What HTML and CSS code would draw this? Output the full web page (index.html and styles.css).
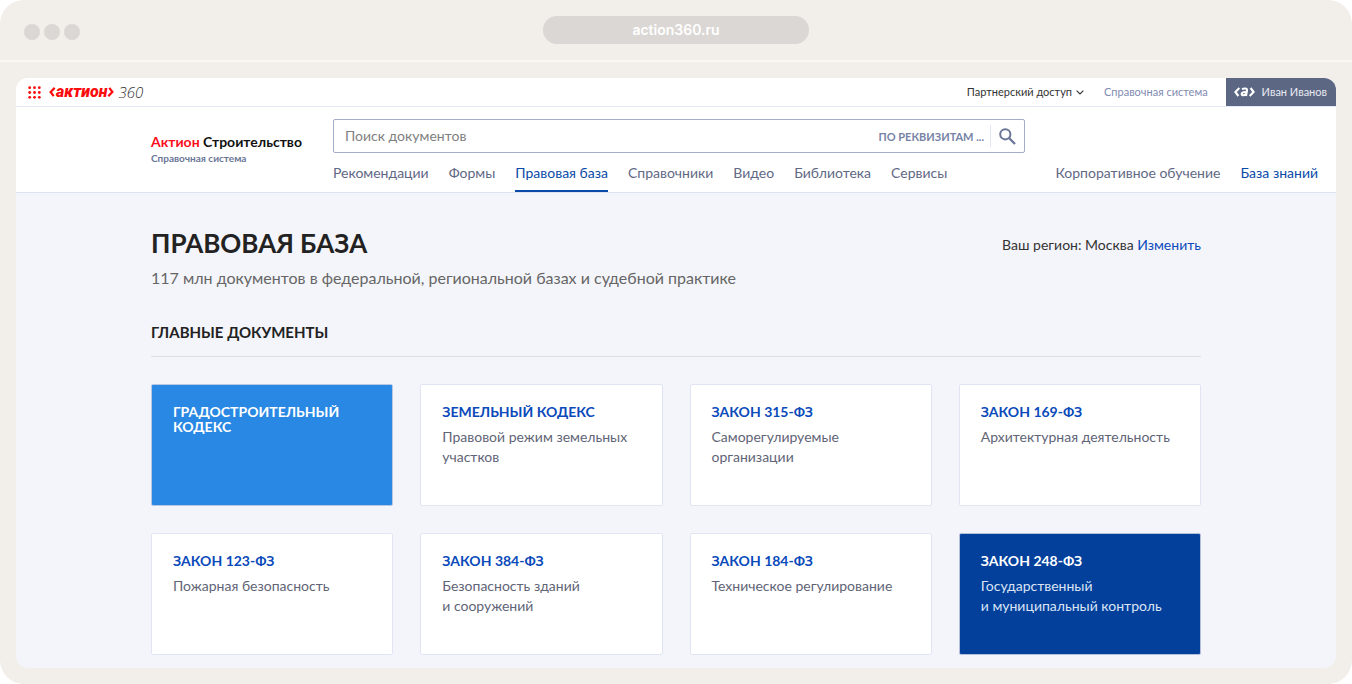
FILE: index.html
```html
<!DOCTYPE html>
<html lang="ru">
<head>
<meta charset="utf-8">
<meta name="viewport" content="width=device-width, initial-scale=1">
<title>Правовая база</title>
<link rel="stylesheet" href="styles.css">
</head>
<body>
<div class="browser">
  <div class="browser-bar">
    <div class="dots"><span class="dot"></span><span class="dot"></span><span class="dot"></span></div>
    <div class="address">action360.ru</div>
  </div>
  <div class="page">
    <div class="topbar">
      <button class="apps" type="button" aria-label="Сервисы">
        <svg width="13" height="13" viewBox="0 0 13 13" fill="#fb0d0d"><circle cx="1.7" cy="1.7" r="1.4"/><circle cx="6.5" cy="1.7" r="1.4"/><circle cx="11.3" cy="1.7" r="1.4"/><circle cx="1.7" cy="6.5" r="1.4"/><circle cx="6.5" cy="6.5" r="1.4"/><circle cx="11.3" cy="6.5" r="1.4"/><circle cx="1.7" cy="11.3" r="1.4"/><circle cx="6.5" cy="11.3" r="1.4"/><circle cx="11.3" cy="11.3" r="1.4"/></svg>
      </button>
      <a class="logo" href="#">
        <svg width="7" height="10" viewBox="0 0 7 10"><path d="M5.7.9 1.6 5 4.7 9.1" fill="none" stroke="#fb0d0d" stroke-width="2.2"/></svg>
        <span class="logo-name">актион</span>
        <svg width="7" height="10" viewBox="0 0 7 10"><path d="M2.3.9 5.4 5 1.3 9.1" fill="none" stroke="#fb0d0d" stroke-width="2.2"/></svg>
        <span class="logo-num">360</span>
      </a>
      <div class="topbar-right">
        <button class="access" type="button">Партнерский доступ
          <svg width="8" height="5" viewBox="0 0 8 5"><path d="M.6.6 4 4 7.4.6" fill="none" stroke="#333" stroke-width="1.1"/></svg>
        </button>
        <a class="system" href="#">Справочная система</a>
        <button class="user" type="button">
          <svg width="21" height="10" viewBox="0 0 21 10" fill="none" stroke="#fff" stroke-width="2.1"><path d="M5.3 1 1.4 5 4.4 9M16.6 1 19.6 5 15.7 9"/><path d="M7.9 2C10 1.4 13.4 1 13 3.3L12 9M12.3 5C9.6 4.8 7.9 5.3 7.7 6.8 7.5 8.8 10.5 8.6 11.9 7"/></svg>
          <span>Иван Иванов</span>
        </button>
      </div>
    </div>
    <header class="header">
      <a class="brand" href="#">
        <span class="brand-name"><span class="brand-red">Актион</span> Строительство</span>
        <span class="brand-sub">Справочная система</span>
      </a>
      <div class="header-main">
        <form class="search" role="search">
          <input class="search-input" type="text" placeholder="Поиск документов" aria-label="Поиск документов">
          <button class="requisites" type="button">ПО РЕКВИЗИТАМ ...</button>
          <button class="search-go" type="button" aria-label="Найти">
            <svg width="17" height="17" viewBox="0 0 17 17" fill="none" stroke="#6a7697" stroke-width="2"><circle cx="6.3" cy="6.3" r="5.1"/><path d="M10 10 16 16" stroke-width="2.3"/></svg>
          </button>
        </form>
        <nav class="nav">
          <a href="#">Рекомендации</a>
          <a href="#">Формы</a>
          <a class="active" href="#">Правовая база</a>
          <a href="#">Справочники</a>
          <a href="#">Видео</a>
          <a href="#">Библиотека</a>
          <a href="#">Сервисы</a>
          <a class="push" href="#">Корпоративное обучение</a>
          <a class="blue" href="#">База знаний</a>
        </nav>
      </div>
    </header>
    <main class="content">
      <div class="title-row">
        <h1>ПРАВОВАЯ БАЗА</h1>
        <p class="region">Ваш регион: Москва <a href="#">Изменить</a></p>
      </div>
      <p class="lead">117 млн документов в федеральной, региональной базах и судебной практике</p>
      <h2>ГЛАВНЫЕ ДОКУМЕНТЫ</h2>
      <div class="cards">
        <a class="card card-sky" href="#"><h3>ГРАДОСТРОИТЕЛЬНЫЙ КОДЕКС</h3></a>
        <a class="card" href="#"><h3>ЗЕМЕЛЬНЫЙ КОДЕКС</h3><p>Правовой режим земельных участков</p></a>
        <a class="card" href="#"><h3>ЗАКОН 315-ФЗ</h3><p>Саморегулируемые организации</p></a>
        <a class="card" href="#"><h3>ЗАКОН 169-ФЗ</h3><p>Архитектурная деятельность</p></a>
        <a class="card" href="#"><h3>ЗАКОН 123-ФЗ</h3><p>Пожарная безопасность</p></a>
        <a class="card" href="#"><h3>ЗАКОН 384-ФЗ</h3><p>Безопасность зданий<br>и сооружений</p></a>
        <a class="card" href="#"><h3>ЗАКОН 184-ФЗ</h3><p>Техническое регулирование</p></a>
        <a class="card card-navy" href="#"><h3>ЗАКОН 248-ФЗ</h3><p>Государственный<br>и муниципальный контроль</p></a>
      </div>
    </main>
  </div>
</div>
</body>
</html>
```
FILE: styles.css
```css
* { box-sizing: border-box; }
body { margin: 0; background: #fff; color: #222; font-family: Lato, "Open Sans", sans-serif; font-size: 14px; }
a { color: inherit; text-decoration: none; }
button, input { font: inherit; color: inherit; border: 0; padding: 0; background: none; }
h1, h2, h3, p { margin: 0; }
svg { display: block; flex: none; }

.browser { background: #f2eeea; border-radius: 24px; padding-bottom: 16px; }
.browser-bar { display: grid; grid-template-columns: 1fr 266px 1fr; align-items: center; height: 62px; padding: 0 24px; border-bottom: 2px solid #f9f8f4; }
.dots { display: flex; gap: 4px; padding-top: 4px; }
.dot { width: 16px; height: 16px; border-radius: 50%; background: #dbd7d4; }
.address { height: 28px; line-height: 28px; border-radius: 14px; background: #dbd7d4; color: #fff; text-align: center; font-family: Inter, sans-serif; font-weight: 600; font-size: 14px; }

.page { margin: 16px 16px 0; border-radius: 12px; overflow: hidden; background: #f4f5fa; }

.topbar { display: flex; align-items: center; height: 29px; padding-left: 12px; background: #fff; border-bottom: 1px solid #e6eaf7; }
.apps { display: flex; margin-right: 8px; }
.logo { display: flex; align-items: center; font-style: italic; line-height: 20px; }
.logo-name { color: #fb0d0d; font-family: Roboto, Inter, sans-serif; font-size: 16px; font-weight: 900; }
.logo-num { margin-left: 4px; color: #333; font-family: "Open Sans", sans-serif; font-size: 15px; font-weight: 300; }
.topbar-right { display: flex; align-items: center; margin-left: auto; font-size: 11px; line-height: 14px; }
.access { display: flex; align-items: center; gap: 4px; color: #333; }
.system { margin: 0 18px 0 20px; color: #7f8bb0; }
.user { display: flex; align-items: center; gap: 7px; height: 28px; padding: 0 9px 0 8px; background: #5c6784; color: #e8eaf2; }

.header { display: grid; grid-template-columns: 182px 1fr; padding: 12px 18px 0 135px; background: #fff; border-bottom: 1px solid #dde2f2; }
.brand { display: flex; flex-direction: column; padding-top: 14px; }
.brand-name { color: #111; font-size: 14px; font-weight: 700; line-height: 18px; white-space: nowrap; }
.brand-red { color: #fb0d1b; }
.brand-sub { color: #6a7697; font-size: 10px; font-weight: 700; line-height: 14px; }
.search { display: flex; align-items: center; max-width: 692px; height: 34px; border: 1px solid #a3acc9; border-radius: 2px; }
.search-input { flex: 1; min-width: 0; height: 32px; padding: 0 11px 2px; outline: 0; font-size: 14px; }
.search-input::placeholder { color: #808080; opacity: 1; }
.requisites { color: #7783a6; font-size: 11px; font-weight: 700; }
.search-go { display: flex; align-items: center; height: 22px; margin-left: 6px; padding: 0 8px; border-left: 1px solid #e3e7f5; }
.nav { display: flex; gap: 20px; color: #5f6885; font-size: 14px; white-space: nowrap; }
.nav a { height: 39px; padding-top: 11px; line-height: 18px; }
.nav .active { color: #0a4aa8; border-bottom: 2px solid #0a4aa8; }
.nav .push { margin-left: auto; }
.nav .blue { color: #0a4aa8; }

.content { max-width: 1050px; margin: 0 auto; padding: 34px 0 13px; }
.title-row { display: flex; align-items: flex-end; justify-content: space-between; }
h1 { font-size: 26px; line-height: 32px; }
.region { padding-bottom: 4px; color: #333; font-size: 14px; line-height: 20px; }
.region a { color: #0a4aba; }
.lead { padding-top: 9px; color: #666; font-size: 16px; line-height: 20px; }
h2 { margin-top: 34px; padding-bottom: 14px; border-bottom: 1px solid #dedfe2; font-size: 15px; line-height: 20px; }
.cards { display: grid; grid-template-columns: repeat(4, 1fr); gap: 27px; margin-top: 27px; }
.card { min-height: 122px; padding: 19px 21px; border: 1px solid #e1e5f3; border-radius: 2px; background: #fff; color: #5f6476; }
.card h3 { color: #0a4aba; font-size: 14px; line-height: 15px; }
.card p { padding-top: 8px; font-size: 14px; line-height: 20px; }
.card-sky { background: #2988e3; border-color: #b9c8e2; }
.card-navy { background: #02409c; border-color: #b3bfdc; color: #dbe4f4; }
.card-sky h3, .card-navy h3 { color: #fff; }
```
